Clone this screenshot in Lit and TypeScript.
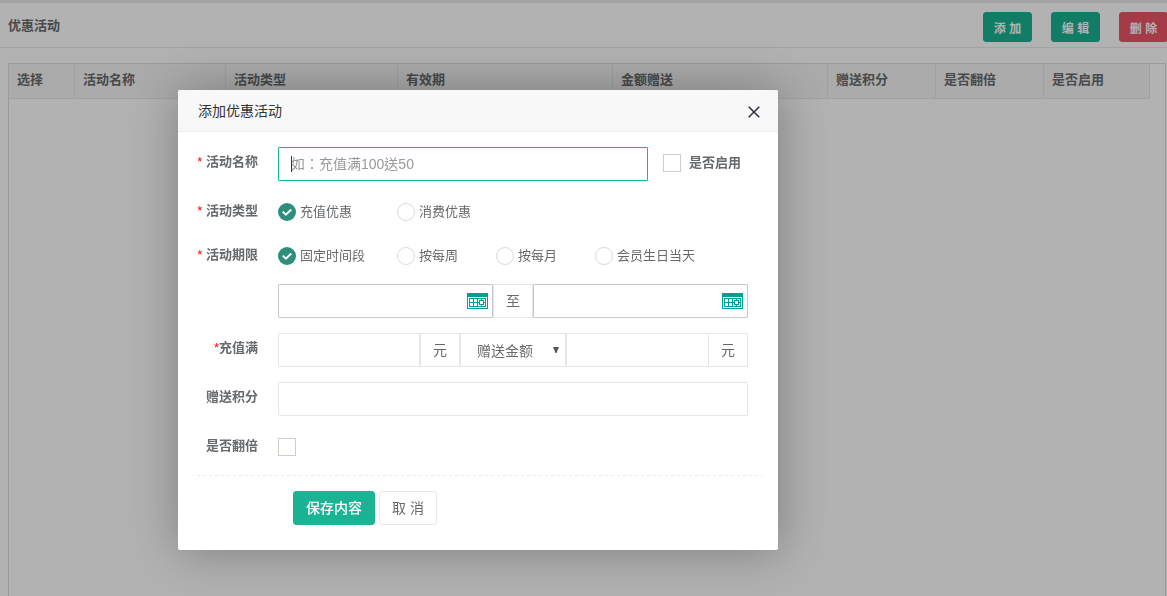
import { LitElement, html, css, svg } from "lit";
import { customElement } from "lit/decorators.js";

const columns = [
  { name: "选择", cls: "w-pick" },
  { name: "活动名称", cls: "w-name" },
  { name: "活动类型", cls: "w-type" },
  { name: "有效期", cls: "w-wide" },
  { name: "金额赠送", cls: "w-wide" },
  { name: "赠送积分", cls: "w-flag" },
  { name: "是否翻倍", cls: "w-flag" },
  { name: "是否启用", cls: "w-last" },
];

const base = css`
  * {
    box-sizing: border-box;
  }
  button,
  input,
  select {
    font: inherit;
    color: inherit;
    margin: 0;
    border-radius: 0;
  }
`;

@customElement("promo-page")
export class PromoPage extends LitElement {
  static styles = [
    base,
    css`
      :host {
        display: flex;
        flex-direction: column;
        height: 100vh;
        overflow: hidden;
        background: #fff;
        border-top: 3px solid #e7eaec;
      }
      .bar {
        display: flex;
        align-items: center;
        justify-content: space-between;
        height: 45px;
        padding: 2px 0 0 8px;
        border-bottom: 1px solid #e7eaec;
        flex: none;
      }
      .heading {
        margin: 0;
        font-size: 13px;
        line-height: 18px;
        font-weight: 700;
      }
      .actions {
        display: flex;
        gap: 19px;
        margin-right: -1px;
        padding-top: 2px;
      }
      .btn {
        width: 49px;
        height: 30px;
        padding: 0;
        border: 1px solid #1ab394;
        border-radius: 3px;
        background: #1ab394;
        color: #fff;
        font-size: 12px;
        font-weight: 700;
      }
      .danger {
        background: #ed5565;
        border-color: #ed5565;
      }
      .frame {
        flex: 1;
        margin: 15px 1px 0 8px;
        border: 1px solid #ddd;
        border-bottom: 0;
        padding-right: 15px;
      }
      .grid {
        width: 100%;
        table-layout: fixed;
        border-collapse: separate;
        border-spacing: 0;
      }
      th {
        height: 35px;
        padding: 0 8px 2px;
        text-align: left;
        font-size: 13px;
        line-height: 18px;
        background: #f5f5f6;
        border-right: 1px solid #e7e7e7;
        border-bottom: 1px solid #e7e7e7;
      }
      .w-pick {
        width: 66px;
      }
      .w-name {
        width: 151px;
      }
      .w-type {
        width: 172px;
      }
      .w-wide {
        width: 215px;
      }
      .w-flag {
        width: 108px;
      }
      .w-last {
        width: 106px;
      }
    `,
  ];

  render() {
    return html`
      <header class="bar">
        <h1 class="heading">优惠活动</h1>
        <div class="actions">
          <button class="btn" type="button">添 加</button>
          <button class="btn" type="button">编 辑</button>
          <button class="btn danger" type="button">删 除</button>
        </div>
      </header>
      <main class="frame">
        <table class="grid">
          <thead>
            <tr>
              ${columns.map((c) => html`<th class=${c.cls} scope="col">${c.name}</th>`)}
            </tr>
          </thead>
        </table>
      </main>
    `;
  }
}

@customElement("promo-dialog")
export class PromoDialog extends LitElement {
  static styles = [
    base,
    css`
      :host {
        display: block;
        background: #fff;
        border-radius: 2px;
        box-shadow: 1px 1px 50px rgba(0, 0, 0, 0.3);
      }
      .title {
        display: flex;
        align-items: center;
        justify-content: space-between;
        height: 42px;
        padding: 0 18px 0 20px;
        background: #f8f8f8;
        border-bottom: 1px solid #eee;
        border-radius: 2px 2px 0 0;
        color: #333;
      }
      .title h2 {
        margin: 0;
        font-size: 14px;
        line-height: 20px;
        font-weight: 400;
      }
      .close {
        display: block;
        padding: 2px 0 0;
        border: 0;
        background: none;
        color: #2d2c3b;
      }
      .close svg {
        display: block;
      }
      form {
        display: flex;
        flex-direction: column;
        gap: 15px;
        padding: 15px 15px 25px 0;
      }
      .row {
        display: grid;
        grid-template-columns: 80px 1fr;
        column-gap: 20px;
        min-height: 29px;
        padding-right: 15px;
        font-size: 13px;
      }
      .label {
        padding-top: 6px;
        line-height: 18px;
        font-weight: 700;
        text-align: right;
      }
      .must {
        color: #f00;
        font-weight: 400;
      }
      .group {
        display: flex;
        font-size: 14px;
      }
      .group.amounts {
        display: grid;
        grid-template-columns: 142fr 40px 106px 143fr 39px;
      }
      .text {
        flex: 1;
        min-width: 0;
        width: 100%;
        height: 34px;
        padding: 0 12px;
        border: 1px solid #e5e6e7;
        border-radius: 1px;
        background: #fff;
        font-size: 14px;
        outline: none;
      }
      .text::placeholder {
        color: #999;
        opacity: 1;
        font-family: "Liberation Sans", "Noto Sans CJK TC", sans-serif;
      }
      .active {
        border-color: #1ab394;
        caret-color: transparent;
      }
      .field {
        position: relative;
        flex: 1;
        display: flex;
      }
      .field::before {
        content: "";
        position: absolute;
        left: 13px;
        top: 9px;
        width: 1px;
        height: 16px;
        background: #333;
      }
      .date {
        position: relative;
        flex: 1;
        display: flex;
      }
      .date .text {
        border-color: #c9c9c9;
      }
      .date svg {
        position: absolute;
        right: 5px;
        top: 9px;
      }
      .addon {
        flex: none;
        width: 40px;
        height: 34px;
        border: 1px solid #e5e6e7;
        line-height: 32px;
        text-align: center;
      }
      .addon.joined {
        width: 39px;
        border-left: 0;
      }
      .pick {
        position: relative;
      }
      .pick select {
        appearance: none;
        width: 100%;
        height: 34px;
        padding: 1px 16px 0;
        border: 1px solid #e5e6e7;
        background: #fff;
        outline: none;
      }
      .pick svg {
        position: absolute;
        right: 7px;
        top: 14px;
        pointer-events: none;
      }
      .check {
        display: flex;
        align-items: center;
        gap: 8px;
        height: 18px;
        margin-top: 7px;
        font-size: 13px;
        font-weight: 700;
        line-height: 18px;
      }
      .check.side {
        width: 100px;
        margin-left: 15px;
        white-space: nowrap;
      }
      .first {
        padding-right: 0;
      }
      .box {
        appearance: none;
        flex: none;
        width: 18px;
        height: 18px;
        border: 1px solid #d2cdc6;
        background: #fff;
      }
      .options {
        display: grid;
        grid-template-columns: 119px 99px 99px 1fr;
        height: 18px;
        margin-top: 7px;
      }
      .option {
        display: flex;
        align-items: center;
        gap: 4px;
        line-height: 18px;
        white-space: nowrap;
      }
      .dot {
        appearance: none;
        flex: none;
        width: 18px;
        height: 18px;
        border: 1px solid #d9d9d4;
        border-radius: 50%;
        background: #fff;
      }
      .dot:checked {
        border: 0;
        background: #2c8f7b
          url("data:image/svg+xml,%3Csvg xmlns='http://www.w3.org/2000/svg' viewBox='0 0 18 18'%3E%3Cpath d='M4.7 8.6l3.2 3.1 5.4-5.2' fill='none' stroke='white' stroke-width='2'/%3E%3C/svg%3E");
      }
      .rule {
        margin: 0 0 0 15px;
        border: 0;
        height: 1px;
        background: repeating-linear-gradient(90deg, #e7eaec 0 1px, transparent 1px 4px, #e7eaec 4px 6px);
      }
      .foot {
        display: flex;
        gap: 4px;
        padding-left: 115px;
      }
      .btn {
        height: 34px;
        padding: 0 12px 2px;
        border: 1px solid #e7eaec;
        border-radius: 3px;
        background: #fff;
        font-size: 14px;
      }
      .primary {
        border-color: #1ab394;
        background: #1ab394;
        color: #fff;
        font-weight: 500;
      }
    `,
  ];

  private must = html`<span class="must">*</span>`;

  private calendar() {
    return html`<svg width="21" height="16" viewBox="0 0 21 16" shape-rendering="crispEdges" aria-hidden="true">
      ${svg`
        <rect width="21" height="16" fill="#009f95"/>
        <rect x="1" y="4" width="19" height="11" fill="#fff"/>
        <path fill="#009f95" d="M2 5h17v1H2zM2 13h17v1H2zM2 5h1v9H2zM18 5h1v9h-1zM6 5h1v9H6zM10 5h1v9h-1zM14 5h1v9h-1zM2 9h17v1H2z"/>
        <rect x="12" y="7" width="5" height="5" fill="#009f95"/>
        <rect x="13" y="8" width="3" height="3" fill="#fff"/>
      `}
    </svg>`;
  }

  private radio(name: string, text: string, checked = false) {
    return html`<label class="option">
      <input class="dot" type="radio" name=${name} ?checked=${checked} />${text}
    </label>`;
  }

  render() {
    return html`
      <div class="title">
        <h2>添加优惠活动</h2>
        <button class="close" type="button" aria-label="关闭">
          <svg width="12" height="12" viewBox="0 0 12 12" aria-hidden="true">
            <path d="M.7.7l10.6 10.6M11.3.7L.7 11.3" stroke="currentColor" stroke-width="1.5" />
          </svg>
        </button>
      </div>
      <form>
        <div class="row first">
          <label class="label" for="name">${this.must} 活动名称</label>
          <div class="group">
            <div class="field">
              <input class="text active" id="name" type="text" placeholder="如：充值满100送50" />
            </div>
            <label class="check side"><input class="box" type="checkbox" />是否启用</label>
          </div>
        </div>
        <div class="row">
          <span class="label">${this.must} 活动类型</span>
          <div class="options">
            ${this.radio("type", "充值优惠", true)}${this.radio("type", "消费优惠")}
          </div>
        </div>
        <div class="row">
          <span class="label">${this.must} 活动期限</span>
          <div class="options">
            ${this.radio("term", "固定时间段", true)}${this.radio("term", "按每周")}
            ${this.radio("term", "按每月")}${this.radio("term", "会员生日当天")}
          </div>
        </div>
        <div class="row">
          <span></span>
          <div class="group">
            <div class="date"><input class="text" type="text" aria-label="开始日期" />${this.calendar()}</div>
            <span class="addon">至</span>
            <div class="date"><input class="text" type="text" aria-label="结束日期" />${this.calendar()}</div>
          </div>
        </div>
        <div class="row">
          <label class="label" for="full">${this.must}充值满</label>
          <div class="group amounts">
            <input class="text" id="full" type="text" />
            <span class="addon">元</span>
            <div class="pick">
              <select aria-label="赠送方式">
                <option>赠送金额</option>
              </select>
              <svg width="6" height="6" viewBox="0 0 6 6" aria-hidden="true">
                <path d="M0 0h6L3.5 6h-1z" fill="#555" />
              </svg>
            </div>
            <input class="text" type="text" aria-label="赠送金额" />
            <span class="addon joined">元</span>
          </div>
        </div>
        <div class="row">
          <label class="label" for="points">赠送积分</label>
          <div class="group"><input class="text" id="points" type="text" /></div>
        </div>
        <div class="row">
          <label class="label" for="twice">是否翻倍</label>
          <div class="check"><input class="box" id="twice" type="checkbox" /></div>
        </div>
        <hr class="rule" />
        <div class="foot">
          <button class="btn primary" type="button">保存内容</button>
          <button class="btn" type="button">取 消</button>
        </div>
      </form>
    `;
  }
}

@customElement("app-root")
export class AppRoot extends LitElement {
  static styles = css`
    :host {
      display: block;
      position: relative;
      min-height: 100vh;
      overflow: hidden;
      color: #676a6c;
      font-family: "Liberation Sans", "Noto Sans CJK SC", sans-serif;
      font-size: 13px;
    }
    .shade {
      position: fixed;
      inset: 0;
      background: rgba(0, 0, 0, 0.3);
    }
    .dialog {
      position: absolute;
      left: 178px;
      top: 90px;
      width: 600px;
    }
  `;

  render() {
    return html`
      <promo-page></promo-page>
      <div class="shade"></div>
      <promo-dialog class="dialog" role="dialog" aria-label="添加优惠活动"></promo-dialog>
    `;
  }
}
